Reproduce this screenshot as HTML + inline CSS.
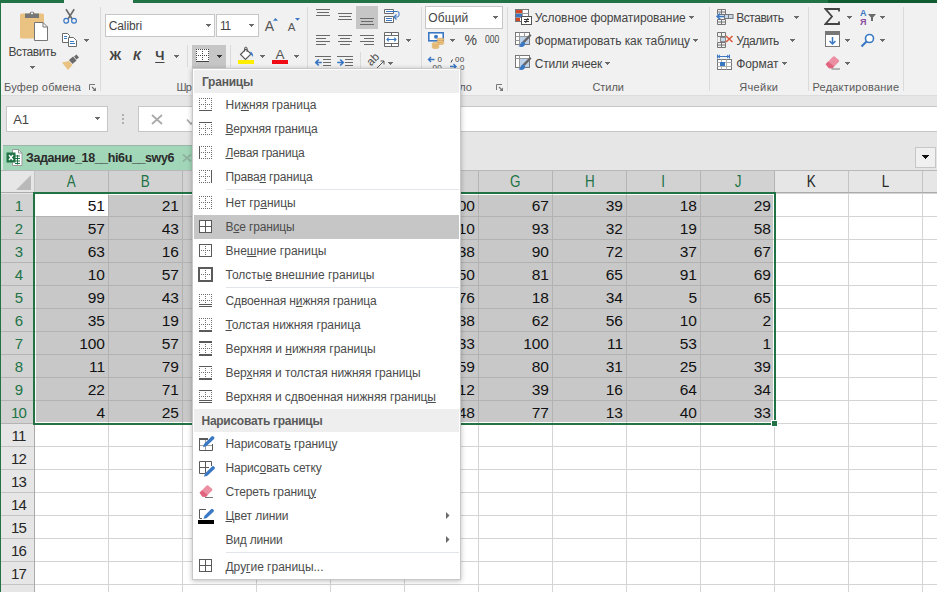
<!DOCTYPE html>
<html lang="ru"><head><meta charset="utf-8"><title>Excel</title>
<style>

html,body{margin:0;padding:0;}
body{width:937px;height:592px;overflow:hidden;background:#e6e6e6;position:relative;font-family:"Liberation Sans","DejaVu Sans",sans-serif;}
div,span,svg{position:absolute;box-sizing:border-box;}
.t{white-space:pre;height:20px;line-height:20px;}
.t u{text-decoration:underline;text-underline-offset:1px;text-decoration-thickness:1px;}
#ribbon{left:0;top:0;width:937px;height:95px;background:#f1f1f1;}
#rtext,#mtext{left:0;top:0;width:0;height:0;}
.gbar{background:#217346;}
.sep{width:1px;background:#dadada;top:7px;height:84px;}
.hl{background:#c6c6c6;}
.box{background:#fff;border:1px solid #c6c6c6;}
/* grid */
#grid{left:0;top:170px;width:937px;height:422px;background:#fff;overflow:hidden;}
#gl{left:35px;top:23px;width:902px;height:399px;
 background-image:linear-gradient(to right,#d4d4d4 1px,transparent 1px),linear-gradient(to bottom,#d4d4d4 1px,transparent 1px);
 background-size:74px 23px,74px 23px;background-position:73px 0,0 23px;}
#selfill{left:36px;top:25px;width:737px;height:227px;background-color:#c8c8c8;
 background-image:linear-gradient(to right,#b2b2b2 1px,transparent 1px),linear-gradient(to bottom,#b2b2b2 1px,transparent 1px);
 background-size:74px 23px,74px 23px;background-position:72px 0,0 21px;}
#chbar{left:0;top:0;width:937px;height:23px;background:#e6e6e6;border-bottom:1px solid #ababab;border-top:1px solid #b8b8b8;}
#rhbar{left:0;top:23px;width:35px;height:399px;background:#e6e6e6;border-right:1px solid #ababab;}
.ch{top:1px;height:21px;line-height:21px;text-align:center;font-size:16px;color:#262626;border-right:1px solid #c3c3c3;}
.ch.sel{background:#d2d2d2;color:#217346;border-right:1px solid #b4b4b4;}
.ch b{position:static;display:inline-block;font-weight:400;transform:scaleX(0.84);}
.rh{left:1px;width:33px;padding-left:2px;height:23px;line-height:23px;text-align:center;font-size:15px;letter-spacing:-0.9px;color:#262626;border-bottom:1px solid #c3c3c3;}
.rh.sel{background:#d2d2d2;color:#217346;border-bottom:1px solid #b4b4b4;}
.c{width:70px;height:22px;line-height:23px;text-align:right;font-size:15.5px;color:#111;}
#selbox{left:33px;top:22px;width:743px;height:233px;border:2px solid #217346;}
#a1{left:35px;top:24px;width:73px;height:22px;background:#fff;}
#handle{left:771px;top:250px;width:7px;height:7px;background:#217346;border:1px solid #fff;}
/* menu */
#menu{left:192px;top:68px;width:269px;height:512px;background:#fff;border:1px solid #c8c8c8;box-shadow:0px 1px 5px rgba(0,0,0,0.27);}
.mh{left:1px;width:265px;background:#eeeeee;}
.msep{left:33px;width:233px;height:1px;background:#e1e4e8;}
.mhl{left:1px;width:265px;height:24px;background:#c6c6c6;}

</style></head>
<body>
<div id="ribbon">
<div class="gbar" style="left:0;top:0;width:64px;height:3px"></div>
<div class="gbar" style="left:133px;top:0;width:804px;height:3px"></div>
<div style="left:828px;top:0;width:109px;height:3px;background:#0f5c30"></div>
<div class="sep" style="left:100px"></div>
<div class="sep" style="left:307px"></div>
<div class="sep" style="left:421px"></div>
<div class="sep" style="left:507px"></div>
<div class="sep" style="left:709px"></div>
<div class="sep" style="left:808px"></div>
<div class="sep" style="left:903px"></div>
<div class="sep" style="left:187px;top:45px;height:22px"></div>
<div class="sep" style="left:230px;top:45px;height:22px"></div>
<div class="sep" style="left:360px;top:52px;height:20px"></div>
<svg style="left:19px;top:10px" width="30" height="32" viewBox="0 0 30 32">
<rect x="1" y="3.500" width="24" height="25" rx="1.500" fill="#eac282"/>
<path d="M6 3.500h4.500a2.600 2.600 0 0 1 5 0H20V8H6z" fill="#767676"/><circle cx="13" cy="3.300" r="1.100" fill="#f1f1f1"/>
<path d="M15.500 12.500h8.500l4.500 4.500V30.500h-13z" fill="#fff" stroke="#767676" stroke-width="1"/><path d="M24 12.500v4.500h4.500" fill="none" stroke="#767676"/>
</svg>
<svg shape-rendering="crispEdges" style="left:30px;top:66px" width="5" height="3" viewBox="0 0 5 3" fill="#6a6a6a"><rect x="0" y="0" width="5" height="1"/><rect x="1" y="1" width="3" height="1"/><rect x="2" y="2" width="1" height="1"/></svg>
<svg style="left:61px;top:8px" width="18" height="17" viewBox="0 0 18 17">
<path d="M5 1.200L11.200 11M13.200 1.200L7 11" stroke="#6a6a6a" stroke-width="1.600" fill="none"/>
<circle cx="5.200" cy="12.800" r="2.400" fill="none" stroke="#3b78c3" stroke-width="1.200"/><circle cx="13" cy="12.800" r="2.400" fill="none" stroke="#3b78c3" stroke-width="1.200"/>
</svg>
<svg style="left:61px;top:32px" width="17" height="16" viewBox="0 0 17 16">
<path d="M1.500 1.500h5l2 2V10.500h-7z" fill="#fff" stroke="#6a6a6a"/>
<path d="M3 4.500h3M3 6.500h3" stroke="#3b78c3"/>
<path d="M7.500 5.500h5l3 3V14.500h-8z" fill="#fff" stroke="#6a6a6a"/>
<path d="M9 9.500h4M9 11.500h5" stroke="#3b78c3"/>
</svg>
<svg shape-rendering="crispEdges" style="left:84px;top:39px" width="5" height="3" viewBox="0 0 5 3" fill="#6a6a6a"><rect x="0" y="0" width="5" height="1"/><rect x="1" y="1" width="3" height="1"/><rect x="2" y="2" width="1" height="1"/></svg>
<svg style="left:61px;top:54px" width="19" height="17" viewBox="0 0 19 17">
<path d="M1 8.500L8 7l3.500 4L7 16z" fill="#eac282"/>
<path d="M8 6l4-3.500 3.500 4L11.500 10z" fill="#6a6a6a"/>
<path d="M13 2.500L15.500 0.500 18 3.500 15.500 5.500z" fill="#6a6a6a"/>
</svg>
<svg style="left:89px;top:84px" width="8" height="8" viewBox="0 0 8 8"><path d="M0.500 6V0.500H6" fill="none" stroke="#777" stroke-width="1"/><path d="M3 3L6 6" fill="none" stroke="#777" stroke-width="1.200"/><path d="M7 3.500V7H3.500z" fill="#777"/></svg>
<div class="box" style="left:105px;top:14px;width:110px;height:23px"></div>
<div class="box" style="left:216px;top:14px;width:43px;height:23px"></div>
<svg shape-rendering="crispEdges" style="left:206px;top:24px" width="5" height="3" viewBox="0 0 5 3" fill="#6a6a6a"><rect x="0" y="0" width="5" height="1"/><rect x="1" y="1" width="3" height="1"/><rect x="2" y="2" width="1" height="1"/></svg>
<svg shape-rendering="crispEdges" style="left:249px;top:24px" width="5" height="3" viewBox="0 0 5 3" fill="#6a6a6a"><rect x="0" y="0" width="5" height="1"/><rect x="1" y="1" width="3" height="1"/><rect x="2" y="2" width="1" height="1"/></svg>
<svg style="left:263px;top:15px" width="40" height="20" viewBox="0 0 40 20">
<text x="1.800" y="15.700" font-size="14" fill="#555" font-family="Liberation Sans, sans-serif">A</text>
<path d="M10 5.800L12.500 3l2.500 2.800z" fill="#3b78c3"/>
<text x="24.800" y="15.700" font-size="11.500" fill="#555" font-family="Liberation Sans, sans-serif">A</text>
<path d="M32 3h5L34.500 5.800z" fill="#3b78c3"/>
</svg>
<svg shape-rendering="crispEdges" style="left:174px;top:55px" width="5" height="3" viewBox="0 0 5 3" fill="#6a6a6a"><rect x="0" y="0" width="5" height="1"/><rect x="1" y="1" width="3" height="1"/><rect x="2" y="2" width="1" height="1"/></svg>
<div class="hl" style="left:192px;top:45px;width:34px;height:23px"></div>
<svg shape-rendering="crispEdges" style="left:196px;top:49px" width="13" height="13" viewBox="0 0 13 13">
<rect x="0" y="0" width="13" height="13" fill="#fff"/>
<path d="M0 0.500h13M0 6.500h13M0.500 0v13M6.500 0v13M12.500 0v13" stroke="#444" stroke-dasharray="1 1" fill="none"/>
<rect x="0" y="12" width="13" height="1" fill="#444"/>
</svg>
<svg shape-rendering="crispEdges" style="left:217px;top:55px" width="5" height="3" viewBox="0 0 5 3" fill="#333"><rect x="0" y="0" width="5" height="1"/><rect x="1" y="1" width="3" height="1"/><rect x="2" y="2" width="1" height="1"/></svg>
<svg style="left:238px;top:46px" width="18" height="18" viewBox="0 0 18 18">
<path d="M2.500 8.500L8 3l5 5-5.500 5.500z" fill="#fff" stroke="#555" stroke-width="1.100"/>
<path d="M6.500 5.500V2.500a1.300 1.300 0 0 1 2.600 0V6" fill="none" stroke="#555" stroke-width="1"/>
<path d="M12.500 5.500c2 1 3 3 2.500 5.500-1-1.500-1.500-2-3-3z" fill="#3b78c3"/>
<rect x="0" y="14" width="16" height="4" fill="#ffee00"/>
</svg>
<svg shape-rendering="crispEdges" style="left:260px;top:55px" width="5" height="3" viewBox="0 0 5 3" fill="#6a6a6a"><rect x="0" y="0" width="5" height="1"/><rect x="1" y="1" width="3" height="1"/><rect x="2" y="2" width="1" height="1"/></svg>
<svg style="left:272px;top:46px" width="16" height="18" viewBox="0 0 16 18">
<text x="3.600" y="13.200" font-size="13.500" fill="#555" font-family="Liberation Sans, sans-serif">A</text>
<rect x="0" y="14" width="16" height="4" fill="#f00a14"/>
</svg>
<svg shape-rendering="crispEdges" style="left:294px;top:55px" width="5" height="3" viewBox="0 0 5 3" fill="#6a6a6a"><rect x="0" y="0" width="5" height="1"/><rect x="1" y="1" width="3" height="1"/><rect x="2" y="2" width="1" height="1"/></svg>
<div class="hl" style="left:356px;top:6px;width:22px;height:23px"></div>
<svg shape-rendering="crispEdges" style="left:316px;top:9px" width="14" height="9" viewBox="0 0 14 9"><rect x="0.0" y="0" width="14" height="1" fill="#6a6a6a"/><rect x="1.0" y="3" width="12" height="1" fill="#6a6a6a"/><rect x="0.0" y="6" width="14" height="1" fill="#6a6a6a"/></svg>
<svg shape-rendering="crispEdges" style="left:338px;top:13px" width="14" height="9" viewBox="0 0 14 9"><rect x="0.0" y="0" width="14" height="1" fill="#6a6a6a"/><rect x="1.0" y="3" width="12" height="1" fill="#6a6a6a"/><rect x="0.0" y="6" width="14" height="1" fill="#6a6a6a"/></svg>
<svg shape-rendering="crispEdges" style="left:360px;top:18px" width="14" height="9" viewBox="0 0 14 9"><rect x="0.0" y="0" width="14" height="1" fill="#6a6a6a"/><rect x="1.0" y="3" width="12" height="1" fill="#6a6a6a"/><rect x="0.0" y="6" width="14" height="1" fill="#6a6a6a"/></svg>
<svg shape-rendering="crispEdges" style="left:316px;top:35px" width="14" height="12" viewBox="0 0 14 12"><rect x="0" y="0" width="14" height="1" fill="#6a6a6a"/><rect x="0" y="3" width="10" height="1" fill="#6a6a6a"/><rect x="0" y="6" width="14" height="1" fill="#6a6a6a"/><rect x="0" y="9" width="10" height="1" fill="#6a6a6a"/></svg>
<svg shape-rendering="crispEdges" style="left:338px;top:35px" width="14" height="12" viewBox="0 0 14 12"><rect x="0.0" y="0" width="14" height="1" fill="#6a6a6a"/><rect x="2.0" y="3" width="10" height="1" fill="#6a6a6a"/><rect x="0.0" y="6" width="14" height="1" fill="#6a6a6a"/><rect x="2.0" y="9" width="10" height="1" fill="#6a6a6a"/></svg>
<svg shape-rendering="crispEdges" style="left:360px;top:35px" width="14" height="12" viewBox="0 0 14 12"><rect x="0" y="0" width="14" height="1" fill="#6a6a6a"/><rect x="4" y="3" width="10" height="1" fill="#6a6a6a"/><rect x="0" y="6" width="14" height="1" fill="#6a6a6a"/><rect x="4" y="9" width="10" height="1" fill="#6a6a6a"/></svg>
<svg style="left:384px;top:8px" width="16" height="17" viewBox="0 0 16 17">
<path d="M0.500 1.500h9v4h-9zM0.500 8.500h9v6h-9z" fill="#fff" stroke="#6a6a6a"/>
<path d="M2 3.500h11.500a1.500 1.500 0 0 1 1.500 1.500v2a2 2 0 0 1-2 2H10.500" fill="none" stroke="#3b78c3"/>
<path d="M2 10.500h6M2 12.500h6" stroke="#3b78c3"/>
<path d="M12.500 6.500L10 9l2.500 2.500" fill="none" stroke="#3b78c3" stroke-width="1.200"/>
</svg>
<svg style="left:384px;top:32px" width="15" height="15" viewBox="0 0 15 15">
<path d="M0.500 0.500h14v14h-14zM0.500 3.500h14M0.500 11.500h14M7.500 0.500v3M7.500 11.500v3" fill="#fff" stroke="#6a6a6a"/>
<path d="M3 7.500h9M4.700 5.700L3 7.500l1.700 1.800M10.300 5.700l1.700 1.800-1.700 1.800" fill="none" stroke="#3b78c3" stroke-width="1.100"/>
</svg>
<svg shape-rendering="crispEdges" style="left:406px;top:39px" width="5" height="3" viewBox="0 0 5 3" fill="#6a6a6a"><rect x="0" y="0" width="5" height="1"/><rect x="1" y="1" width="3" height="1"/><rect x="2" y="2" width="1" height="1"/></svg>
<svg style="left:315px;top:56px" width="16" height="13" viewBox="0 0 16 13">
<path d="M0 0.500h16M8 3.500h8M8 6.500h8M8 9.500h8M0 12.500h16" stroke="#6a6a6a" shape-rendering="crispEdges"/>
<path d="M0.800 6.500h6M3.800 3.500L0.800 6.500l3 3" fill="none" stroke="#3b78c3" stroke-width="1.700"/></svg>
<svg style="left:337px;top:56px" width="16" height="13" viewBox="0 0 16 13">
<path d="M0 0.500h16M8 3.500h8M8 6.500h8M8 9.500h8M0 12.500h16" stroke="#6a6a6a" shape-rendering="crispEdges"/>
<path d="M0.200 6.500h6M3.200 3.500l3 3-3 3" fill="none" stroke="#3b78c3" stroke-width="1.700"/></svg>
<svg style="left:366px;top:52px" width="20" height="18" viewBox="0 0 20 18">
<text x="0" y="0" font-size="11.500" fill="#4a4a4a" transform="translate(5 14.500) rotate(-45)" font-family="Liberation Sans, sans-serif">ab</text>
<path d="M9.500 17.500L18 9M14.500 9H18V12.500" fill="none" stroke="#555"/></svg>
<svg shape-rendering="crispEdges" style="left:388px;top:62px" width="5" height="3" viewBox="0 0 5 3" fill="#6a6a6a"><rect x="0" y="0" width="5" height="1"/><rect x="1" y="1" width="3" height="1"/><rect x="2" y="2" width="1" height="1"/></svg>
<div class="box" style="left:425px;top:6px;width:78px;height:23px"></div>
<svg shape-rendering="crispEdges" style="left:493px;top:16px" width="5" height="3" viewBox="0 0 5 3" fill="#6a6a6a"><rect x="0" y="0" width="5" height="1"/><rect x="1" y="1" width="3" height="1"/><rect x="2" y="2" width="1" height="1"/></svg>
<svg style="left:428px;top:32px" width="17" height="17" viewBox="0 0 17 17">
<rect x="0.800" y="0.800" width="14.400" height="8" fill="#fff" stroke="#3b78c3" stroke-width="1.600"/>
<circle cx="8" cy="4.700" r="2" fill="#3b78c3"/>
<g fill="#eac282" stroke="#d4a052" stroke-width="0.500"><ellipse cx="12.500" cy="11.300" rx="3.500" ry="1.300"/><ellipse cx="12.500" cy="9.300" rx="3.500" ry="1.300"/><ellipse cx="12.500" cy="7.300" rx="3.500" ry="1.300"/>
<ellipse cx="7.500" cy="15.300" rx="3.500" ry="1.300"/><ellipse cx="7.500" cy="13.500" rx="3.500" ry="1.300"/><ellipse cx="7.500" cy="11.700" rx="3.500" ry="1.300"/></g>
</svg>
<svg shape-rendering="crispEdges" style="left:450px;top:39px" width="5" height="3" viewBox="0 0 5 3" fill="#6a6a6a"><rect x="0" y="0" width="5" height="1"/><rect x="1" y="1" width="3" height="1"/><rect x="2" y="2" width="1" height="1"/></svg>
<svg style="left:484px;top:33px" width="17" height="12" viewBox="0 0 17 12"><text x="0.900" y="10.300" font-size="10" fill="#444" textLength="14.300" lengthAdjust="spacingAndGlyphs" font-family="Liberation Sans, sans-serif">000</text></svg>
<svg style="left:427px;top:55px" width="18" height="16" viewBox="0 0 18 16">
<path d="M1.500 4.500h6M4 2L1.500 4.500 4 7" fill="none" stroke="#3b78c3" stroke-width="1.400"/>
<text x="10.500" y="7.200" font-size="8" fill="#444" font-family="Liberation Sans, sans-serif">0</text>
<text x="5.500" y="14.800" font-size="8" fill="#444" font-family="Liberation Sans, sans-serif" letter-spacing="0.300">00</text></svg>
<svg style="left:449px;top:55px" width="18" height="16" viewBox="0 0 18 16">
<text x="6" y="7.200" font-size="8" fill="#444" font-family="Liberation Sans, sans-serif" letter-spacing="0.300">00</text>
<path d="M3.500 4.500L2 7.500" stroke="#444" fill="none"/>
<path d="M1 11.500h6M4.500 9L7 11.500 4.500 14" fill="none" stroke="#3b78c3" stroke-width="1.400"/>
<text x="11" y="14.800" font-size="8" fill="#444" font-family="Liberation Sans, sans-serif">0</text></svg>
<svg style="left:496px;top:84px" width="8" height="8" viewBox="0 0 8 8"><path d="M0.500 6V0.500H6" fill="none" stroke="#777" stroke-width="1"/><path d="M3 3L6 6" fill="none" stroke="#777" stroke-width="1.200"/><path d="M7 3.500V7H3.500z" fill="#777"/></svg>
<svg style="left:515px;top:9px" width="17" height="16" viewBox="0 0 17 16">
<rect x="0.500" y="0.500" width="13" height="12" fill="#fff" stroke="#777"/>
<path d="M0.500 4.500h13M0.500 8.500h13M7.500 0.500v12" stroke="#999"/>
<rect x="1" y="1" width="6" height="3" fill="#d24726"/><rect x="1" y="5" width="6" height="3" fill="#3b78c3"/><rect x="1" y="9" width="4" height="3" fill="#d24726"/>
<rect x="6.500" y="7.500" width="10" height="8" fill="#fff" stroke="#555"/><path d="M9 10.500h5M9 12.500h5M13 9l-2.500 5" stroke="#333" fill="none"/>
</svg>
<svg shape-rendering="crispEdges" style="left:689px;top:16px" width="5" height="3" viewBox="0 0 5 3" fill="#6a6a6a"><rect x="0" y="0" width="5" height="1"/><rect x="1" y="1" width="3" height="1"/><rect x="2" y="2" width="1" height="1"/></svg>
<svg style="left:515px;top:32px" width="17" height="17" viewBox="0 0 17 17">
<rect x="0.500" y="0.500" width="14" height="12" fill="#fff" stroke="#777"/>
<path d="M0.500 4.500h14M0.500 8.500h14M4.500 0.500v12M9.500 0.500v12" stroke="#999"/>
<rect x="5" y="5" width="9" height="7" fill="#bcd2ea"/>
<path d="M16.500 3.500L9.500 11 7.500 9.500 15 2z" fill="#666"/><path d="M8 9.500c-2.500 0-2 3.500-4.500 4.500 3 2.500 7.500 0 6.500-3z" fill="#3b78c3"/>
</svg>
<svg shape-rendering="crispEdges" style="left:693px;top:39px" width="5" height="3" viewBox="0 0 5 3" fill="#6a6a6a"><rect x="0" y="0" width="5" height="1"/><rect x="1" y="1" width="3" height="1"/><rect x="2" y="2" width="1" height="1"/></svg>
<svg style="left:515px;top:55px" width="17" height="17" viewBox="0 0 17 17">
<rect x="0.500" y="0.500" width="14" height="12" fill="#fff" stroke="#777"/>
<path d="M0.500 3.500h14M4.500 0.500v12" stroke="#999"/>
<rect x="5" y="4" width="9" height="8" fill="#bcd2ea"/>
<path d="M16.500 3.500L9.500 11 7.500 9.500 15 2z" fill="#666"/><path d="M8 9.500c-2.500 0-2 3.500-4.500 4.500 3 2.500 7.500 0 6.500-3z" fill="#3b78c3"/>
</svg>
<svg shape-rendering="crispEdges" style="left:605px;top:62px" width="5" height="3" viewBox="0 0 5 3" fill="#6a6a6a"><rect x="0" y="0" width="5" height="1"/><rect x="1" y="1" width="3" height="1"/><rect x="2" y="2" width="1" height="1"/></svg>
<svg style="left:716px;top:9px" width="18" height="16" viewBox="0 0 18 16">
<path d="M1.500 0.500h8v5h-8zM1.500 3h8M5.500 0.500v5M1.500 10.500h8v5h-8zM1.500 13h8M5.500 10.500v5" fill="none" stroke="#777"/>
<rect x="8.500" y="5.500" width="8.500" height="4" fill="#c9d9ec" stroke="#777"/><path d="M12.500 5.500v4" stroke="#777"/>
<path d="M1.200 7.500h7M4.200 4.700L1.200 7.500l3 2.800" fill="none" stroke="#3b78c3" stroke-width="1.600"/></svg>
<svg shape-rendering="crispEdges" style="left:794px;top:16px" width="5" height="3" viewBox="0 0 5 3" fill="#6a6a6a"><rect x="0" y="0" width="5" height="1"/><rect x="1" y="1" width="3" height="1"/><rect x="2" y="2" width="1" height="1"/></svg>
<svg style="left:716px;top:32px" width="18" height="16" viewBox="0 0 18 16">
<path d="M1.500 0.500h8v4h-8zM5.500 0.500v4M1.500 10.500h8v5h-8zM1.500 13h8M5.500 10.500v5" fill="none" stroke="#777"/>
<rect x="4.500" y="5.500" width="5" height="4" fill="#c9d9ec" stroke="#8a8a8a"/><path d="M1.500 4.500v6" stroke="#999" stroke-dasharray="1 1"/>
<path d="M10 4l6.500 6M16.500 4l-6.500 6" stroke="#dc5a3c" stroke-width="1.600"/></svg>
<svg shape-rendering="crispEdges" style="left:790px;top:39px" width="5" height="3" viewBox="0 0 5 3" fill="#6a6a6a"><rect x="0" y="0" width="5" height="1"/><rect x="1" y="1" width="3" height="1"/><rect x="2" y="2" width="1" height="1"/></svg>
<svg style="left:716px;top:54px" width="17" height="17" viewBox="0 0 17 17">
<path d="M1.500 0.500v4M13.500 0.500v4M2 2.500h11" stroke="#3b78c3" fill="none"/><path d="M4 1L2 2.500l2 1.500M11 1l2 1.500-2 1.500" fill="none" stroke="#3b78c3"/>
<rect x="1.500" y="5.500" width="14" height="10" fill="#fff" stroke="#777"/><path d="M1.500 8.500h14M1.500 12.500h14M5.500 5.500v10M10.500 5.500v10" stroke="#b0b0b0"/>
<rect x="4" y="8" width="5" height="4" fill="#3b78c3"/></svg>
<svg shape-rendering="crispEdges" style="left:782px;top:62px" width="5" height="3" viewBox="0 0 5 3" fill="#6a6a6a"><rect x="0" y="0" width="5" height="1"/><rect x="1" y="1" width="3" height="1"/><rect x="2" y="2" width="1" height="1"/></svg>
<svg style="left:824px;top:8px" width="17" height="17" viewBox="0 0 17 17">
<path d="M15 3.500V1H1.500L8 8.500 1.500 16H15v-2.500" fill="none" stroke="#444" stroke-width="1.800"/></svg>
<svg shape-rendering="crispEdges" style="left:847px;top:16px" width="5" height="3" viewBox="0 0 5 3" fill="#6a6a6a"><rect x="0" y="0" width="5" height="1"/><rect x="1" y="1" width="3" height="1"/><rect x="2" y="2" width="1" height="1"/></svg>
<svg style="left:860px;top:8px" width="18" height="18" viewBox="0 0 18 18">
<text x="0" y="8" font-size="9" font-weight="700" fill="#3b78c3" font-family="Liberation Sans, sans-serif">А</text>
<text x="0" y="17" font-size="9" font-weight="700" fill="#8a4a9e" font-family="Liberation Sans, sans-serif">Я</text>
<path d="M8 6h8l-3 3.500V13h-2V9.500z" fill="#6a6a6a"/></svg>
<svg shape-rendering="crispEdges" style="left:880px;top:16px" width="5" height="3" viewBox="0 0 5 3" fill="#6a6a6a"><rect x="0" y="0" width="5" height="1"/><rect x="1" y="1" width="3" height="1"/><rect x="2" y="2" width="1" height="1"/></svg>
<svg style="left:825px;top:31px" width="16" height="17" viewBox="0 0 16 17">
<rect x="0.500" y="0.500" width="14" height="15" fill="#fff" stroke="#777"/><rect x="1" y="1" width="13" height="3" fill="#777"/>
<path d="M7.500 6v7M4.500 10l3 3 3-3" fill="none" stroke="#3b78c3" stroke-width="1.500"/></svg>
<svg shape-rendering="crispEdges" style="left:845px;top:39px" width="5" height="3" viewBox="0 0 5 3" fill="#6a6a6a"><rect x="0" y="0" width="5" height="1"/><rect x="1" y="1" width="3" height="1"/><rect x="2" y="2" width="1" height="1"/></svg>
<svg style="left:860px;top:33px" width="16" height="15" viewBox="0 0 16 15">
<circle cx="9.500" cy="5.500" r="4" fill="#fff" stroke="#3b78c3" stroke-width="1.600"/><path d="M6.500 8.500L1.500 13.500" stroke="#3b78c3" stroke-width="2.200"/></svg>
<svg shape-rendering="crispEdges" style="left:880px;top:39px" width="5" height="3" viewBox="0 0 5 3" fill="#6a6a6a"><rect x="0" y="0" width="5" height="1"/><rect x="1" y="1" width="3" height="1"/><rect x="2" y="2" width="1" height="1"/></svg>
<svg style="left:825px;top:55px" width="16" height="15" viewBox="0 0 16 15">
<path d="M0.600 9.300L8.100 1.600a1.200 1.200 0 0 1 1.600-0.100L13.800 5a1.200 1.200 0 0 1 0.100 1.700L7.500 13.200H4z" fill="#ec8fa3"/>
<path d="M0.600 9.300L3.200 6.600 9.200 11.500 7.500 13.200H4z" fill="#e0647e"/>
<path d="M6.500 14h8.500" stroke="#777"/></svg>
<svg shape-rendering="crispEdges" style="left:845px;top:62px" width="5" height="3" viewBox="0 0 5 3" fill="#6a6a6a"><rect x="0" y="0" width="5" height="1"/><rect x="1" y="1" width="3" height="1"/><rect x="2" y="2" width="1" height="1"/></svg>
</div>
<div style="left:0;top:95px;width:937px;height:1px;background:#dcdcdc"></div>
<div class="gbar" style="left:0;top:0;width:1px;height:592px;z-index:5"></div>
<div class="box" style="left:6px;top:106px;width:102px;height:26px"></div>
<svg shape-rendering="crispEdges" style="left:95px;top:117px" width="5" height="3" viewBox="0 0 5 3" fill="#6a6a6a"><rect x="0" y="0" width="5" height="1"/><rect x="1" y="1" width="3" height="1"/><rect x="2" y="2" width="1" height="1"/></svg>
<svg shape-rendering="crispEdges" style="left:122px;top:114px" width="2" height="11" viewBox="0 0 2 11"><rect x="0" y="0" width="2" height="2" fill="#b0b0b0"/><rect x="0" y="4" width="2" height="2" fill="#b0b0b0"/><rect x="0" y="8" width="2" height="2" fill="#b0b0b0"/></svg>
<div class="box" style="left:138px;top:106px;width:330px;height:26px;background:#fff"></div>
<svg style="left:151px;top:114px" width="12" height="11" viewBox="0 0 12 11"><path d="M1 1l10 9M11 1l-10 9" stroke="#a9a9a9" stroke-width="1.700"/></svg>
<svg style="left:186px;top:114px" width="14" height="11" viewBox="0 0 14 11"><path d="M1 5.500l4 4.500 8-9" fill="none" stroke="#a9a9a9" stroke-width="1.700"/></svg>
<div style="left:460px;top:106px;width:477px;height:26px;background:#fff;border-top:1px solid #c6c6c6;border-bottom:1px solid #c6c6c6"></div>
<div style="left:3px;top:145px;width:420px;height:25px;background:#a1d6b8;border-top:1px solid #9db5a8"></div>
<svg style="left:6px;top:148px" width="17" height="19" viewBox="0 0 17 19">
<path d="M6.500 1.500h6l3.500 3.500v12.500h-9.500z" fill="#fff" stroke="#9a9a9a"/><path d="M12.500 1.500v3.500h3.500" fill="none" stroke="#9a9a9a"/>
<path d="M9 8h5M9 10.500h5M9 13h5M9 15.500h5M11.500 7v9.500" stroke="#217346" stroke-width="1"/>
<rect x="0.500" y="4.500" width="9" height="10" fill="#217346"/>
<path d="M3 7l4 5M7 7l-4 5" stroke="#fff" stroke-width="1.400"/></svg>
<svg style="left:182px;top:153px" width="10" height="10" viewBox="0 0 10 10"><path d="M1 1.500l8 7M9 1.500l-8 7" stroke="#8fb3a0" stroke-width="1.700"/></svg>
<div class="box" style="left:915px;top:147px;width:21px;height:21px;background:#f0f0f0;border-color:#c6c6c6"></div>
<svg shape-rendering="crispEdges" style="left:922px;top:155px" width="7" height="4" viewBox="0 0 7 4" fill="#111"><rect x="0" y="0" width="7" height="1"/><rect x="1" y="1" width="5" height="1"/><rect x="2" y="2" width="3" height="1"/><rect x="3" y="3" width="1" height="1"/></svg>
<div id="grid">
<div id="gl"></div>
<div id="selfill"></div>
<div id="a1"></div>
<div id="chbar"></div>
<div id="rhbar"></div>
<div style="left:34px;top:1px;width:1px;height:21px;background:#c3c3c3"></div>
<svg style="left:16px;top:5px" width="15" height="15" viewBox="0 0 15 15"><path d="M15 0V15H0z" fill="#b9b9b9"/></svg>
<div class="ch sel" style="left:35px;width:74px"><b>A</b></div>
<div class="ch sel" style="left:109px;width:74px"><b>B</b></div>
<div class="ch sel" style="left:183px;width:74px"><b>C</b></div>
<div class="ch sel" style="left:257px;width:74px"><b>D</b></div>
<div class="ch sel" style="left:331px;width:74px"><b>E</b></div>
<div class="ch sel" style="left:405px;width:74px"><b>F</b></div>
<div class="ch sel" style="left:479px;width:74px"><b>G</b></div>
<div class="ch sel" style="left:553px;width:74px"><b>H</b></div>
<div class="ch sel" style="left:627px;width:74px"><b>I</b></div>
<div class="ch sel" style="left:701px;width:74px"><b>J</b></div>
<div class="ch" style="left:775px;width:74px"><b>K</b></div>
<div class="ch" style="left:849px;width:74px"><b>L</b></div>
<div class="ch" style="left:923px;width:74px"><b>M</b></div>
<div class="rh sel" style="top:24px">1</div>
<div class="rh sel" style="top:47px">2</div>
<div class="rh sel" style="top:70px">3</div>
<div class="rh sel" style="top:93px">4</div>
<div class="rh sel" style="top:116px">5</div>
<div class="rh sel" style="top:139px">6</div>
<div class="rh sel" style="top:162px">7</div>
<div class="rh sel" style="top:185px">8</div>
<div class="rh sel" style="top:208px">9</div>
<div class="rh sel" style="top:231px">10</div>
<div class="rh" style="top:254px">11</div>
<div class="rh" style="top:277px">12</div>
<div class="rh" style="top:300px">13</div>
<div class="rh" style="top:323px">14</div>
<div class="rh" style="top:346px">15</div>
<div class="rh" style="top:369px">16</div>
<div class="rh" style="top:392px">17</div>
<div class="rh" style="top:415px">18</div>
<div class="c" style="left:35px;top:24px">51</div>
<div class="c" style="left:35px;top:47px">57</div>
<div class="c" style="left:35px;top:70px">63</div>
<div class="c" style="left:35px;top:93px">10</div>
<div class="c" style="left:35px;top:116px">99</div>
<div class="c" style="left:35px;top:139px">35</div>
<div class="c" style="left:35px;top:162px">100</div>
<div class="c" style="left:35px;top:185px">11</div>
<div class="c" style="left:35px;top:208px">22</div>
<div class="c" style="left:35px;top:231px">4</div>
<div class="c" style="left:109px;top:24px">21</div>
<div class="c" style="left:109px;top:47px">43</div>
<div class="c" style="left:109px;top:70px">16</div>
<div class="c" style="left:109px;top:93px">57</div>
<div class="c" style="left:109px;top:116px">43</div>
<div class="c" style="left:109px;top:139px">19</div>
<div class="c" style="left:109px;top:162px">57</div>
<div class="c" style="left:109px;top:185px">79</div>
<div class="c" style="left:109px;top:208px">71</div>
<div class="c" style="left:109px;top:231px">25</div>
<div class="c" style="left:183px;top:24px">84</div>
<div class="c" style="left:183px;top:47px">26</div>
<div class="c" style="left:183px;top:70px">9</div>
<div class="c" style="left:183px;top:93px">73</div>
<div class="c" style="left:183px;top:116px">48</div>
<div class="c" style="left:183px;top:139px">92</div>
<div class="c" style="left:183px;top:162px">15</div>
<div class="c" style="left:183px;top:185px">60</div>
<div class="c" style="left:183px;top:208px">37</div>
<div class="c" style="left:183px;top:231px">81</div>
<div class="c" style="left:257px;top:24px">12</div>
<div class="c" style="left:257px;top:47px">95</div>
<div class="c" style="left:257px;top:70px">44</div>
<div class="c" style="left:257px;top:93px">28</div>
<div class="c" style="left:257px;top:116px">66</div>
<div class="c" style="left:257px;top:139px">7</div>
<div class="c" style="left:257px;top:162px">83</div>
<div class="c" style="left:257px;top:185px">52</div>
<div class="c" style="left:257px;top:208px">30</div>
<div class="c" style="left:257px;top:231px">74</div>
<div class="c" style="left:331px;top:24px">70</div>
<div class="c" style="left:331px;top:47px">3</div>
<div class="c" style="left:331px;top:70px">88</div>
<div class="c" style="left:331px;top:93px">41</div>
<div class="c" style="left:331px;top:116px">17</div>
<div class="c" style="left:331px;top:139px">59</div>
<div class="c" style="left:331px;top:162px">24</div>
<div class="c" style="left:331px;top:185px">96</div>
<div class="c" style="left:331px;top:208px">45</div>
<div class="c" style="left:331px;top:231px">8</div>
<div class="c" style="left:405px;top:24px">100</div>
<div class="c" style="left:405px;top:47px">10</div>
<div class="c" style="left:405px;top:70px">38</div>
<div class="c" style="left:405px;top:93px">50</div>
<div class="c" style="left:405px;top:116px">76</div>
<div class="c" style="left:405px;top:139px">38</div>
<div class="c" style="left:405px;top:162px">33</div>
<div class="c" style="left:405px;top:185px">59</div>
<div class="c" style="left:405px;top:208px">12</div>
<div class="c" style="left:405px;top:231px">48</div>
<div class="c" style="left:479px;top:24px">67</div>
<div class="c" style="left:479px;top:47px">93</div>
<div class="c" style="left:479px;top:70px">90</div>
<div class="c" style="left:479px;top:93px">81</div>
<div class="c" style="left:479px;top:116px">18</div>
<div class="c" style="left:479px;top:139px">62</div>
<div class="c" style="left:479px;top:162px">100</div>
<div class="c" style="left:479px;top:185px">80</div>
<div class="c" style="left:479px;top:208px">39</div>
<div class="c" style="left:479px;top:231px">77</div>
<div class="c" style="left:553px;top:24px">39</div>
<div class="c" style="left:553px;top:47px">32</div>
<div class="c" style="left:553px;top:70px">72</div>
<div class="c" style="left:553px;top:93px">65</div>
<div class="c" style="left:553px;top:116px">34</div>
<div class="c" style="left:553px;top:139px">56</div>
<div class="c" style="left:553px;top:162px">11</div>
<div class="c" style="left:553px;top:185px">31</div>
<div class="c" style="left:553px;top:208px">16</div>
<div class="c" style="left:553px;top:231px">13</div>
<div class="c" style="left:627px;top:24px">18</div>
<div class="c" style="left:627px;top:47px">19</div>
<div class="c" style="left:627px;top:70px">37</div>
<div class="c" style="left:627px;top:93px">91</div>
<div class="c" style="left:627px;top:116px">5</div>
<div class="c" style="left:627px;top:139px">10</div>
<div class="c" style="left:627px;top:162px">53</div>
<div class="c" style="left:627px;top:185px">25</div>
<div class="c" style="left:627px;top:208px">64</div>
<div class="c" style="left:627px;top:231px">40</div>
<div class="c" style="left:701px;top:24px">29</div>
<div class="c" style="left:701px;top:47px">58</div>
<div class="c" style="left:701px;top:70px">67</div>
<div class="c" style="left:701px;top:93px">69</div>
<div class="c" style="left:701px;top:116px">65</div>
<div class="c" style="left:701px;top:139px">2</div>
<div class="c" style="left:701px;top:162px">1</div>
<div class="c" style="left:701px;top:185px">39</div>
<div class="c" style="left:701px;top:208px">34</div>
<div class="c" style="left:701px;top:231px">33</div>
<div id="selbox"></div><div id="handle"></div>
</div>
<div id="rtext">
<span class="t" style="left:8.5px;top:42.3px;font-size:12px;color:#444444;letter-spacing:-0.42px;">Вставить</span>
<span class="t" style="left:4.0px;top:76.7px;font-size:11px;color:#5a5a5a;letter-spacing:0.19px;">Буфер обмена</span>
<span class="t" style="left:108.7px;top:16.3px;font-size:12px;color:#444444;letter-spacing:-0.09px;">Calibri</span>
<span class="t" style="left:220.0px;top:16.3px;font-size:12px;color:#444444;letter-spacing:-1.20px;">11</span>
<span class="t" style="left:109.6px;top:46.4px;font-size:13px;color:#444;letter-spacing:0.85px;font-weight:700;">Ж</span>
<span class="t" style="left:133.0px;top:46.4px;font-size:13px;color:#444;letter-spacing:1.10px;font-weight:700;font-style:italic;">К</span>
<span class="t" style="left:155.2px;top:46.4px;font-size:13px;color:#444;letter-spacing:0.16px;font-weight:700;text-decoration:underline;text-underline-offset:1.5px;text-decoration-thickness:1px;">Ч</span>
<span class="t" style="left:176.5px;top:76.7px;font-size:11px;color:#5a5a5a;letter-spacing:-0.85px;">Шр</span>
<span class="t" style="left:428.2px;top:8.4px;font-size:12px;color:#444444;letter-spacing:0.16px;">Общий</span>
<span class="t" style="left:464.4px;top:30.4px;font-size:14px;color:#444;letter-spacing:-0.05px;">%</span>
<span class="t" style="left:440.0px;top:76.7px;font-size:11px;color:#5a5a5a;letter-spacing:0.07px;">Число</span>
<span class="t" style="left:534.8px;top:7.6px;font-size:12px;color:#444444;letter-spacing:-0.08px;">Условное форматирование</span>
<span class="t" style="left:534.8px;top:30.6px;font-size:12px;color:#444444;letter-spacing:-0.04px;">Форматировать как таблицу</span>
<span class="t" style="left:534.8px;top:53.6px;font-size:12px;color:#444444;letter-spacing:-0.19px;">Стили ячеек</span>
<span class="t" style="left:592.4px;top:76.7px;font-size:11px;color:#5a5a5a;letter-spacing:-0.02px;">Стили</span>
<span class="t" style="left:736.2px;top:7.6px;font-size:12px;color:#444444;letter-spacing:-0.45px;">Вставить</span>
<span class="t" style="left:736.2px;top:30.6px;font-size:12px;color:#444444;letter-spacing:-0.45px;">Удалить</span>
<span class="t" style="left:736.2px;top:53.6px;font-size:12px;color:#444444;letter-spacing:-0.07px;">Формат</span>
<span class="t" style="left:739.2px;top:76.7px;font-size:11px;color:#5a5a5a;letter-spacing:0.38px;">Ячейки</span>
<span class="t" style="left:812.5px;top:76.7px;font-size:11px;color:#5a5a5a;letter-spacing:0.21px;">Редактирование</span>
<span class="t" style="left:13.3px;top:110.0px;font-size:13px;color:#444;letter-spacing:-0.15px;">A1</span>
<span class="t" style="left:26.0px;top:148.0px;font-size:12.5px;color:#2b2b2b;letter-spacing:-0.40px;font-weight:700;">Задание_18__hi6u__swy6</span>
</div>
<div id="menu">
<div class="mh" style="top:1px;height:23px"></div>
<div class="mh" style="top:340px;height:23px"></div>
<div class="mhl" style="top:146px"></div>
<div class="msep" style="top:120px"></div>
<div class="msep" style="top:218px"></div>
<div class="msep" style="top:483px"></div>
<svg shape-rendering="crispEdges" style="left:6px;top:29px" width="13" height="13" viewBox="0 0 13 13"><path d="M0 0.500h13M0 6.500h13M0 12.500h13M0.500 0v13M6.500 0v13M12.500 0v13" stroke="#6e6e6e" stroke-dasharray="1 1" fill="none"/><rect x="0" y="12" width="13" height="1" fill="#fff"/><path d="M0 12.500h13" stroke="#5a5a5a"/></svg>
<svg shape-rendering="crispEdges" style="left:6px;top:53px" width="13" height="13" viewBox="0 0 13 13"><path d="M0 0.500h13M0 6.500h13M0 12.500h13M0.500 0v13M6.500 0v13M12.500 0v13" stroke="#6e6e6e" stroke-dasharray="1 1" fill="none"/><rect x="0" y="0" width="13" height="1" fill="#fff"/><path d="M0 0.500h13" stroke="#5a5a5a"/></svg>
<svg shape-rendering="crispEdges" style="left:6px;top:77px" width="13" height="13" viewBox="0 0 13 13"><path d="M0 0.500h13M0 6.500h13M0 12.500h13M0.500 0v13M6.500 0v13M12.500 0v13" stroke="#6e6e6e" stroke-dasharray="1 1" fill="none"/><rect x="0" y="0" width="1" height="13" fill="#fff"/><path d="M0.500 0v13" stroke="#5a5a5a"/></svg>
<svg shape-rendering="crispEdges" style="left:6px;top:101px" width="13" height="13" viewBox="0 0 13 13"><path d="M0 0.500h13M0 6.500h13M0 12.500h13M0.500 0v13M6.500 0v13M12.500 0v13" stroke="#6e6e6e" stroke-dasharray="1 1" fill="none"/><rect x="12" y="0" width="1" height="13" fill="#fff"/><path d="M12.500 0v13" stroke="#5a5a5a"/></svg>
<svg shape-rendering="crispEdges" style="left:6px;top:127px" width="13" height="13" viewBox="0 0 13 13"><path d="M0 0.500h13M0 6.500h13M0 12.500h13M0.500 0v13M6.500 0v13M12.500 0v13" stroke="#6e6e6e" stroke-dasharray="1 1" fill="none"/></svg>
<svg shape-rendering="crispEdges" style="left:6px;top:151px" width="13" height="13" viewBox="0 0 13 13"><path d="M0.500 0.500h12v12h-12zM0 6.500h13M6.500 0v13" stroke="#5a5a5a" fill="#fff"/></svg>
<svg shape-rendering="crispEdges" style="left:6px;top:175px" width="13" height="13" viewBox="0 0 13 13"><rect x="0.500" y="0.500" width="12" height="12" fill="#fff" stroke="#5a5a5a"/><path d="M2 6.500h9M6.500 2v9" stroke="#6e6e6e" stroke-dasharray="1 1"/></svg>
<svg shape-rendering="crispEdges" style="left:5px;top:198px" width="15" height="15" viewBox="0 0 15 15"><rect x="1" y="1" width="13" height="13" fill="#fff" stroke="#5a5a5a" stroke-width="2"/><path d="M3 7.500h9M7.500 3v9" stroke="#6e6e6e" stroke-dasharray="1 1"/></svg>
<svg shape-rendering="crispEdges" style="left:6px;top:225px" width="13" height="13" viewBox="0 0 13 13"><path d="M0 0.500h13M0 6.500h13M0.500 0v9M6.500 0v9M12.500 0v9" stroke="#6e6e6e" stroke-dasharray="1 1" fill="none"/><path d="M0 10.500h13M0 12.500h13" stroke="#5a5a5a"/></svg>
<svg shape-rendering="crispEdges" style="left:6px;top:249px" width="13" height="14" viewBox="0 0 13 14"><path d="M0 0.500h13M0 6.500h13M0.500 0v11M6.500 0v11M12.500 0v11" stroke="#6e6e6e" stroke-dasharray="1 1" fill="none"/><rect x="0" y="12" width="13" height="2" fill="#5a5a5a"/></svg>
<svg shape-rendering="crispEdges" style="left:6px;top:272px" width="13" height="15" viewBox="0 0 13 15"><path d="M0 7.500h13" stroke="#6e6e6e" stroke-dasharray="1 1" fill="none"/><path d="M0.500 3v9M6.500 3v9M12.500 3v9" stroke="#6e6e6e" stroke-dasharray="1 1" fill="none"/><rect x="0" y="0" width="13" height="2" fill="#5a5a5a"/><rect x="0" y="13" width="13" height="2" fill="#5a5a5a"/></svg>
<svg shape-rendering="crispEdges" style="left:6px;top:297px" width="13" height="14" viewBox="0 0 13 14"><path d="M0 6.500h13" stroke="#6e6e6e" stroke-dasharray="1 1" fill="none"/><path d="M0.500 2v9M6.500 2v9M12.500 2v9" stroke="#6e6e6e" stroke-dasharray="1 1" fill="none"/><rect x="0" y="0" width="13" height="1" fill="#5a5a5a"/><rect x="0" y="12" width="13" height="2" fill="#5a5a5a"/></svg>
<svg shape-rendering="crispEdges" style="left:6px;top:321px" width="13" height="13" viewBox="0 0 13 13"><path d="M0 6.500h13" stroke="#6e6e6e" stroke-dasharray="1 1" fill="none"/><path d="M0.500 2v7M6.500 2v7M12.500 2v7" stroke="#6e6e6e" stroke-dasharray="1 1" fill="none"/><path d="M0 0.500h13M0 10.500h13M0 12.500h13" stroke="#5a5a5a"/></svg>
<svg style="left:6px;top:366px" width="17" height="17" viewBox="0 0 17 17"><path d="M6.500 5v10.500M0.500 10.500h13" stroke="#a0a0a0" fill="none"/><path d="M9 3.500H0.500V15.500H13.500V9" fill="none" stroke="#5a5a5a"/><rect x="0" y="3" width="9" height="2" fill="#5a5a5a"/><path d="M4 12.200L5 9 12.500 1.500a1.400 1.400 0 0 1 2 0l0.500 0.500a1.400 1.400 0 0 1 0 2L7.300 11.300z" fill="#3b78c3"/></svg>
<svg style="left:6px;top:392px" width="17" height="17" viewBox="0 0 17 17"><path d="M12.500 5V0.500H0.500V12.500H6M0.500 6.500H10M6.500 0.500V12.500" fill="none" stroke="#5a5a5a"/><path d="M5 15.700L6 12.500 13 5.500a1.400 1.400 0 0 1 2 0l0.500 0.500a1.400 1.400 0 0 1 0 2L8.300 14.800z" fill="#3b78c3"/></svg>
<svg style="left:6px;top:415px" width="15" height="15" viewBox="0 0 15 15"><path d="M0.600 8.800L7.600 1.600a1.200 1.200 0 0 1 1.600-0.100L13 4.800a1.200 1.200 0 0 1 0.100 1.700L7 12.700H3.500z" fill="#ec8fa3"/><path d="M0.600 8.800L3 6.300 8.700 11 7 12.700H3.500z" fill="#e0647e"/><path d="M6 13.500h8" stroke="#777"/></svg>
<svg style="left:5px;top:439px" width="17" height="16" viewBox="0 0 17 16"><path d="M8 1.500H1.500V10.500H4" fill="none" stroke="#5a5a5a"/><path d="M5.500 11L6.500 7.800 13 1.300a1.400 1.400 0 0 1 2 0l0.500 0.500a1.400 1.400 0 0 1 0 2L8.800 10z" fill="#3b78c3"/><rect x="0" y="12" width="16" height="4" fill="#000"/></svg>
<svg shape-rendering="crispEdges" style="left:6px;top:490px" width="13" height="13" viewBox="0 0 13 13"><path d="M0.500 0.500h12v12h-12zM0 6.500h13M6.500 0v13" stroke="#5a5a5a" fill="none"/></svg>
<svg style="left:253px;top:443px" width="4" height="7" viewBox="0 0 4 7"><path d="M0 0l3.500 3.500L0 7z" fill="#6a6a6a"/></svg>
<svg style="left:253px;top:467px" width="4" height="7" viewBox="0 0 4 7"><path d="M0 0l3.500 3.500L0 7z" fill="#6a6a6a"/></svg>
</div>
<div id="mtext">
<span class="t" style="left:225.5px;top:94.5px;font-size:12px;color:#4c4c4c;letter-spacing:-0.00px;">Ни<u>ж</u>няя граница</span>
<span class="t" style="left:225.5px;top:118.5px;font-size:12px;color:#4c4c4c;letter-spacing:-0.19px;"><u>В</u>ерхняя граница</span>
<span class="t" style="left:225.5px;top:142.5px;font-size:12px;color:#4c4c4c;letter-spacing:-0.22px;"><u>Л</u>евая граница</span>
<span class="t" style="left:225.5px;top:166.5px;font-size:12px;color:#4c4c4c;letter-spacing:-0.17px;">Права<u>я</u> граница</span>
<span class="t" style="left:225.5px;top:192.5px;font-size:12px;color:#4c4c4c;letter-spacing:-0.01px;">Нет гр<u>а</u>ницы</span>
<span class="t" style="left:225.5px;top:216.5px;font-size:12px;color:#4c4c4c;letter-spacing:-0.14px;">В<u>с</u>е границы</span>
<span class="t" style="left:225.5px;top:240.5px;font-size:12px;color:#4c4c4c;letter-spacing:0.01px;">Вне<u>ш</u>ние границы</span>
<span class="t" style="left:225.5px;top:264.5px;font-size:12px;color:#4c4c4c;letter-spacing:-0.01px;">Толсты<u>е</u> внешние границы</span>
<span class="t" style="left:225.5px;top:290.5px;font-size:12px;color:#4c4c4c;letter-spacing:-0.12px;">Сдвоенная н<u>и</u>жняя граница</span>
<span class="t" style="left:225.5px;top:314.5px;font-size:12px;color:#4c4c4c;letter-spacing:-0.07px;"><u>Т</u>олстая нижняя граница</span>
<span class="t" style="left:225.5px;top:338.5px;font-size:12px;color:#4c4c4c;letter-spacing:-0.04px;">Верхняя и <u>н</u>ижняя границы</span>
<span class="t" style="left:225.5px;top:362.5px;font-size:12px;color:#4c4c4c;letter-spacing:-0.08px;">Вер<u>х</u>няя и толстая нижняя границы</span>
<span class="t" style="left:225.5px;top:386.5px;font-size:12px;color:#4c4c4c;letter-spacing:-0.09px;">Верхняя и сдвоенная нижняя границ<u>ы</u></span>
<span class="t" style="left:225.5px;top:433.5px;font-size:12px;color:#4c4c4c;letter-spacing:-0.07px;">Нарисоват<u>ь</u> границу</span>
<span class="t" style="left:225.5px;top:457.5px;font-size:12px;color:#4c4c4c;letter-spacing:-0.15px;">Нарис<u>о</u>вать сетку</span>
<span class="t" style="left:225.5px;top:481.5px;font-size:12px;color:#4c4c4c;letter-spacing:-0.14px;">Стереть границ<u>у</u></span>
<span class="t" style="left:225.5px;top:505.5px;font-size:12px;color:#4c4c4c;letter-spacing:-0.10px;"><u>Ц</u>вет линии</span>
<span class="t" style="left:225.5px;top:529.5px;font-size:12px;color:#4c4c4c;letter-spacing:-0.20px;">Ви<u>д</u> линии</span>
<span class="t" style="left:225.5px;top:556.5px;font-size:12px;color:#4c4c4c;letter-spacing:-0.02px;">Дру<u>г</u>ие границы...</span>
<span class="t" style="left:202.0px;top:71.5px;font-size:12px;color:#5a5a5a;letter-spacing:-0.23px;font-weight:700;">Границы</span>
<span class="t" style="left:201.5px;top:410.8px;font-size:12px;color:#5a5a5a;letter-spacing:-0.27px;font-weight:700;">Нарисовать границы</span>
</div>
</body></html>
